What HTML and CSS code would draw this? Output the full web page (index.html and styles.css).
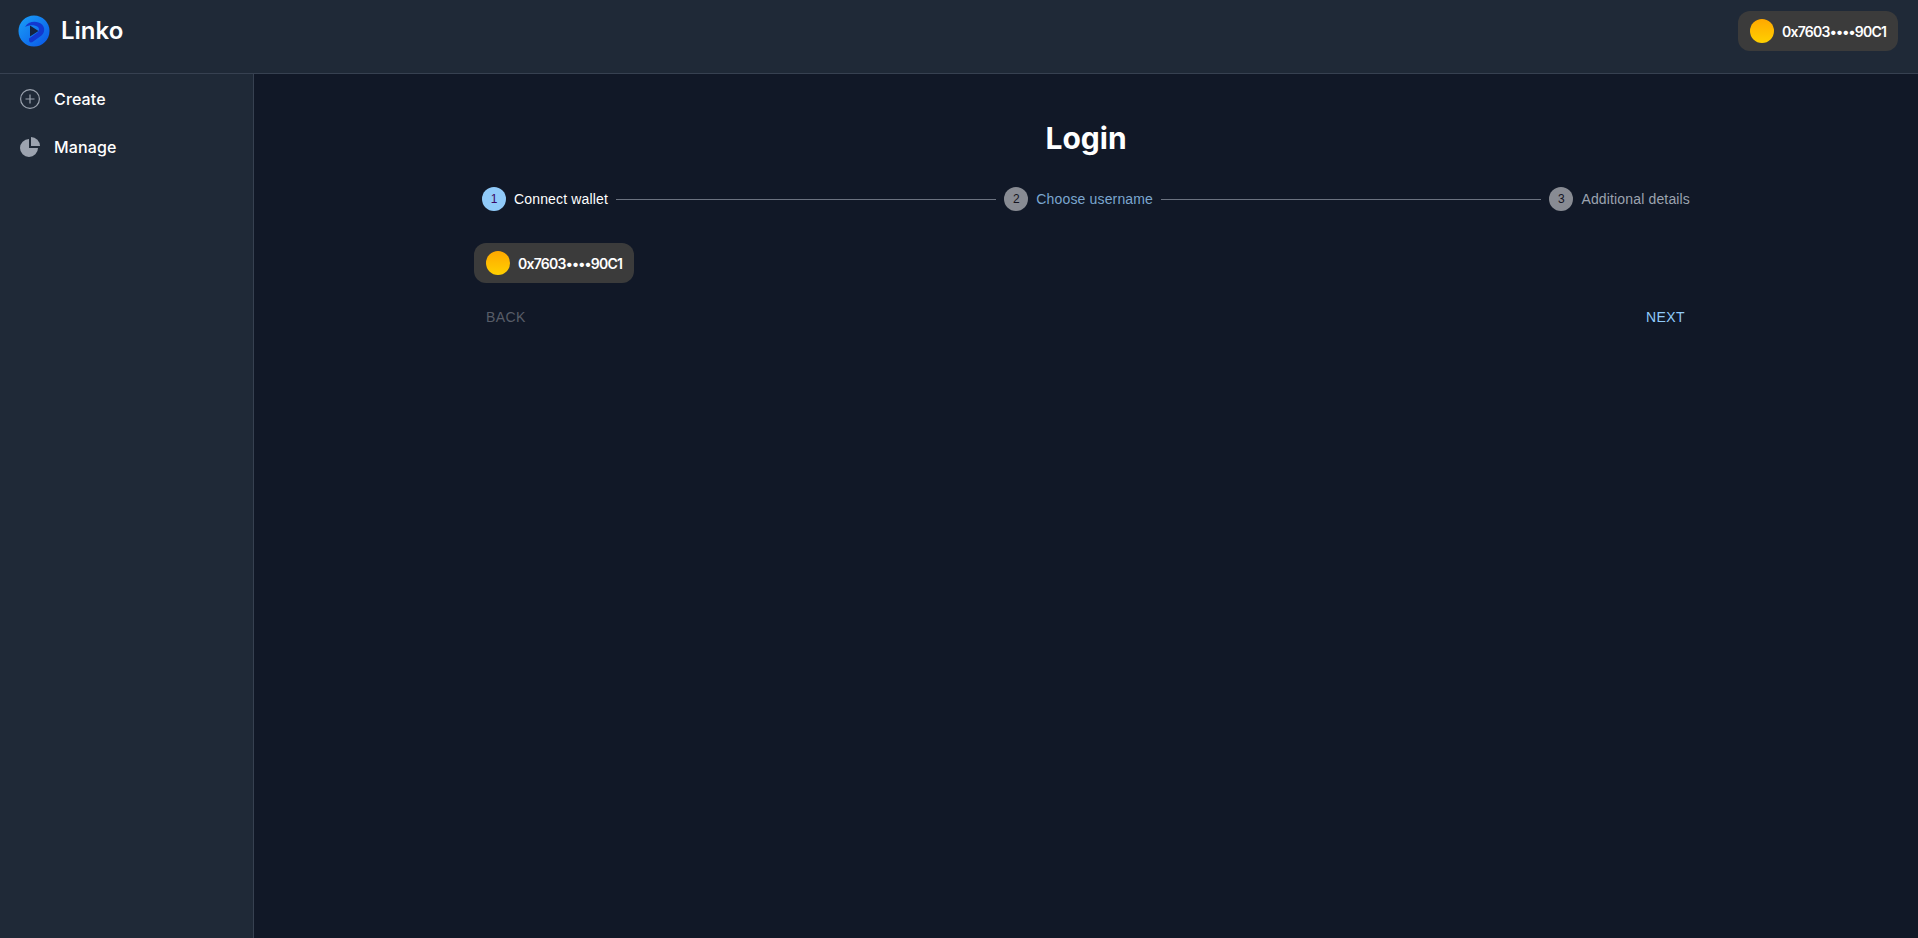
FILE: index.html
```
<!DOCTYPE html>
<html lang="en">
<head>
<meta charset="utf-8">
<title>Linko</title>
<link rel="stylesheet" href="styles.css">
</head>
<body>
<header class="topbar">
  <a class="brand">
    <svg class="logo" viewBox="0 0 32 32" aria-hidden="true">
      <defs>
        <linearGradient id="lg" x1="0" y1="0" x2="1" y2="1"><stop offset="0" stop-color="#1aa0f8"/><stop offset="1" stop-color="#0a55e6"/></linearGradient>
      </defs>
      <circle cx="16" cy="16" r="15.500" fill="url(#lg)"/>
      <path d="M7 12C10 6 19 5 24 9.500c3 3 3 8-.500 11l-9 6.500c-2 1-3.500 0-3.500-2v-1.500l8.500-6c2-1.500 2-4 .500-5.500C17 9.500 11 9.500 7 12z" fill="#1238cf"/>
      <path d="M12 10.500l8.500 5.500-8.500 5.500z" fill="#14233f"/>
    </svg>
    <span class="brand-name">Linko</span>
  </a>
  <button class="wallet"><span class="coin"></span><span class="addr">0x7603••••90C1</span></button>
</header>
<div class="shell">
  <nav class="sidebar">
    <a class="nav-item">
      <svg class="nav-icon" viewBox="0 0 20 20" fill="none" stroke="#9ca3af" stroke-width="1.200"><circle cx="10" cy="10" r="9.400"/><path d="M10 5.500v9M5.500 10h9"/></svg>
      <span>Create</span>
    </a>
    <a class="nav-item">
      <svg class="nav-icon" viewBox="0 0 20 20" fill="#9ca3af"><path d="M9 2v9h9a9 9 0 1 1-9-9z"/><path d="M11 0a9 9 0 0 1 9 9h-9z"/></svg>
      <span>Manage</span>
    </a>
  </nav>
  <main class="main">
    <div class="panel">
      <h1 class="title">Login</h1>
      <ol class="stepper">
        <li class="step active"><span class="num">1</span><span class="label">Connect wallet</span></li>
        <li class="line"></li>
        <li class="step"><span class="num">2</span><span class="label blue">Choose username</span></li>
        <li class="line"></li>
        <li class="step"><span class="num">3</span><span class="label">Additional details</span></li>
      </ol>
      <button class="wallet"><span class="coin"></span><span class="addr">0x7603••••90C1</span></button>
      <div class="actions">
        <button class="text-btn back">BACK</button>
        <button class="text-btn next">NEXT</button>
      </div>
    </div>
  </main>
</div>
</body>
</html>
```
FILE: styles.css
```
* { box-sizing: border-box; }
html, body { height: 100%; }
body {
  margin: 0;
  display: flex;
  flex-direction: column;
  background: #111827;
  color: #fff;
  font-family: "Liberation Sans", Arial, sans-serif;
  overflow: hidden;
}
.topbar {
  height: 74px;
  flex: none;
  display: flex;
  align-items: flex-start;
  justify-content: space-between;
  padding: 11px 20px 0 18px;
  background: #1f2937;
  border-bottom: 1px solid #374151;
}
.brand { display: flex; align-items: center; gap: 11px; height: 40px; }
.logo { width: 32px; height: 32px; display: block; }
.brand-name {
  font: 600 24px/32px Inter, sans-serif;
  color: #fff;
}
.wallet {
  display: flex;
  align-items: center;
  gap: 8px;
  width: 160px;
  height: 40px;
  padding: 0 12px;
  border: 0;
  border-radius: 12px;
  background: #3b3b3b;
  color: #fff;
  cursor: pointer;
}
.coin {
  width: 24px;
  height: 24px;
  flex: none;
  border-radius: 50%;
  background: linear-gradient(180deg, #ffa800, #ffd000);
}
.addr {
  padding-top: 1px;
  font: 600 14px/20px Inter, sans-serif;
  letter-spacing: -0.75px;
  white-space: nowrap;
}
.shell { flex: 1; display: flex; min-height: 0; }
.sidebar {
  width: 254px;
  flex: none;
  padding: 1px 12px 0;
  background: #1f2937;
  border-right: 1px solid #374151;
}
.nav-item {
  display: flex;
  align-items: center;
  gap: 14px;
  height: 48px;
  padding-left: 8px;
  font: 500 16px/24px Inter, sans-serif;
  letter-spacing: 0.15px;
  color: #fff;
}
.nav-icon { width: 20px; height: 20px; flex: none; }
.main { flex: 1; min-width: 0; display: flex; justify-content: center; }
.panel { width: 1224px; padding-top: 46px; }
.title {
  margin: 0 0 31px;
  font: 700 30px/36px Inter, sans-serif;
  text-align: center;
}
.stepper {
  list-style: none;
  margin: 0 0 32px;
  padding: 0 8px;
  display: flex;
  align-items: center;
  gap: 8px;
  height: 24px;
}
.step { display: flex; align-items: center; gap: 8px; white-space: nowrap; }
.num {
  width: 24px;
  height: 24px;
  border-radius: 50%;
  background: #888b93;
  color: #14141f;
  font-size: 12px;
  line-height: 24px;
  text-align: center;
}
.label { font-size: 14px; line-height: 20px; letter-spacing: 0.15px; color: #9ca3af; }
.label.blue { color: #7ba6cf; }
.active .num { background: #90caf9; color: #3b0764; }
.active .label { color: #fff; }
.line { flex: 1; height: 1px; background: #6b7280; }
.actions {
  display: flex;
  justify-content: space-between;
  margin-top: 16px;
  padding: 0 5px 0 4px;
}
.text-btn {
  height: 36px;
  padding: 0 8px;
  border: 0;
  background: transparent;
  font: 14px/36px "Liberation Sans", Arial, sans-serif;
  letter-spacing: 0.4px;
  text-transform: uppercase;
}
.back { color: #585d68; }
.next { color: #90caf9; }
```
